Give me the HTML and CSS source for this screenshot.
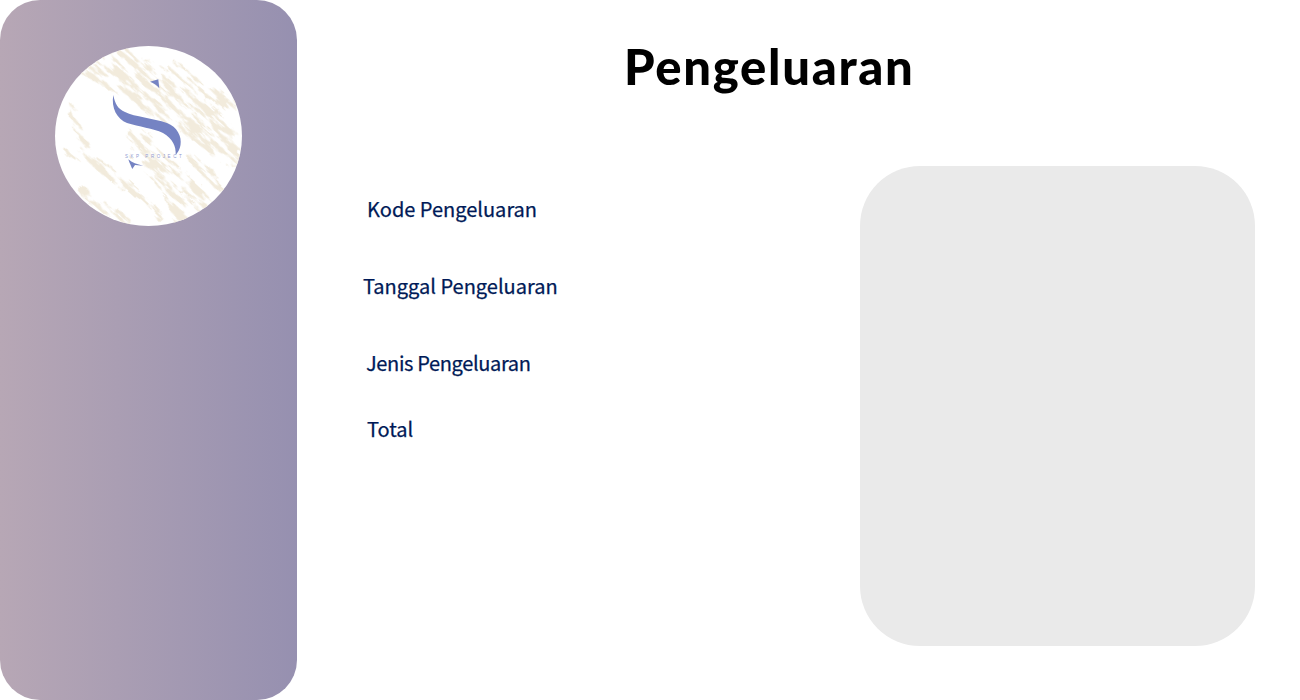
FILE: index.html
```html
<!DOCTYPE html>
<html lang="id">
<head>
<meta charset="utf-8">
<title>Pengeluaran</title>
<link rel="stylesheet" href="styles.css">
</head>
<body>
<div class="page">
  <aside class="sidebar">
    <svg class="logo" viewBox="0 0 187 180" width="187" height="180" aria-label="SKP Project">
      <defs>
        <clipPath id="round"><ellipse cx="93.5" cy="90" rx="93.5" ry="90"/></clipPath>
        <filter id="marble" filterUnits="userSpaceOnUse" x="-150" y="-150" width="500" height="500">
          <feTurbulence type="fractalNoise" baseFrequency="0.045 0.2" numOctaves="5" seed="23" result="noise"/>
          <feDisplacementMap in="SourceGraphic" in2="noise" scale="10" xChannelSelector="R" yChannelSelector="G" result="warped"/>
          <feColorMatrix in="noise" type="matrix" values="0 0 0 0 0  0 0 0 0 0  0 0 0 0 0  8 0 0 0 -3.5" result="holes"/>
          <feComposite in="warped" in2="holes" operator="in" result="broken"/>
          <feGaussianBlur in="broken" stdDeviation="0.4"/>
        </filter>
      </defs>
      <ellipse cx="93.5" cy="90" rx="93.5" ry="90" fill="#fff"/>
      <g clip-path="url(#round)">
        <g filter="url(#marble)" transform="rotate(42 93.5 90)">
          <g transform="rotate(-42 93.5 90)" fill="none" stroke="#f2ebdc" stroke-linecap="round">
            <path d="M30 22 L62 36 L102 52 L140 84 L178 112" stroke-width="18"/>
            <path d="M50 10 L80 30 L116 50 L150 84" stroke-width="22"/>
            <path d="M70 8 L100 26 L130 50 L164 74" stroke-width="14"/>
            <path d="M52 34 L76 48 L96 60 L118 76" stroke-width="14"/>
            <path d="M120 22 L146 42 L176 62" stroke-width="12"/>
            <path d="M148 70 L168 84 L182 98" stroke-width="18"/>
            <path d="M16 60 L26 92 L36 112 L68 142" stroke-width="7"/>
            <path d="M12 106 L36 114 L56 126" stroke-width="8"/>
            <path d="M28 146 L50 162 L72 174" stroke-width="9"/>
            <path d="M82 88 L100 110 L118 124 L150 158" stroke-width="16"/>
            <path d="M96 120 L118 146 L128 176" stroke-width="18"/>
            <path d="M62 128 L88 152 L106 172" stroke-width="7"/>
            <path d="M136 112 L158 132 L170 154" stroke-width="9"/>
            <path d="M74 90 L78 112" stroke-width="3"/>
          </g>
        </g>
      </g>
      <g fill="#7583c3">
        <path d="M58.3 49 C60 58 63 63 70 66 C80 71 98 72 112 77 C122 81 127 90 125.5 99 C125 103 123 106 120.7 109 C121 100 118 93 108 87 C98 82 84 81 72 77 C62 73 56 62 58.3 49 Z"/>
        <path d="M95 35.7 L103.3 33.3 L104.3 42.3 C102 39.5 99 37 95 35.7 Z"/>
        <path d="M73.3 113.3 C77 116.5 82 118.5 88.3 119.7 L80 119 L77.3 123 C76 120 74.5 117 73.3 113.3 Z"/>
      </g>
      <text class="logo-text" x="70" y="112">SKP PROJECT</text>
    </svg>
  </aside>
  <main class="content">
    <h1 class="title">Pengeluaran</h1>
    <div class="body-row">
      <form class="fields">
        <label class="field field-kode">Kode Pengeluaran</label>
        <label class="field field-tanggal">Tanggal Pengeluaran</label>
        <label class="field field-jenis">Jenis Pengeluaran</label>
        <label class="field field-total">Total</label>
      </form>
      <div class="panel"></div>
    </div>
  </main>
</div>
</body>
</html>
```
FILE: styles.css
```css
html, body {
  margin: 0;
  padding: 0;
  background: #fff;
}
.page {
  display: flex;
  width: 1300px;
  height: 700px;
  overflow: hidden;
}
.sidebar {
  flex: 0 0 297px;
  height: 700px;
  box-sizing: border-box;
  padding: 46px 55px 0;
  border-radius: 40px;
  background: linear-gradient(90deg, #b7a7b5 0%, #9690b0 100%);
}
.logo {
  display: block;
}
.logo-text {
  font-family: "Liberation Sans", sans-serif;
  font-size: 4.5px;
  letter-spacing: 2.55px;
  fill: #8f9ad0;
}
.content {
  flex: 1;
  min-width: 0;
}
.title {
  margin: 0;
  padding: 36px 0 0 327px;
  height: 166px;
  box-sizing: border-box;
  font-family: "Lato", sans-serif;
  font-weight: 900;
  font-size: 49px;
  line-height: 60px;
  letter-spacing: 1.7px;
  color: #000;
}
.body-row {
  display: flex;
  justify-content: space-between;
  padding-right: 45px;
}
.fields {
  display: flex;
  flex-direction: column;
  padding-top: 29px;
}
.field {
  display: block;
  font-family: "Noto Sans CJK KR", sans-serif;
  font-weight: 400;
  -webkit-text-stroke: 0.25px #001a57;
  font-size: 20px;
  line-height: 28px;
  color: #001a57;
}
.field-kode { margin: 0 0 49px 70px; }
.field-tanggal { margin: 0 0 49px 66px; }
.field-jenis { margin: 0 0 38px 69px; letter-spacing: -0.35px; }
.field-total { margin: 0 0 0 70px; }
.panel {
  width: 395px;
  height: 480px;
  border-radius: 60px;
  background: #eaeaea;
}
```
